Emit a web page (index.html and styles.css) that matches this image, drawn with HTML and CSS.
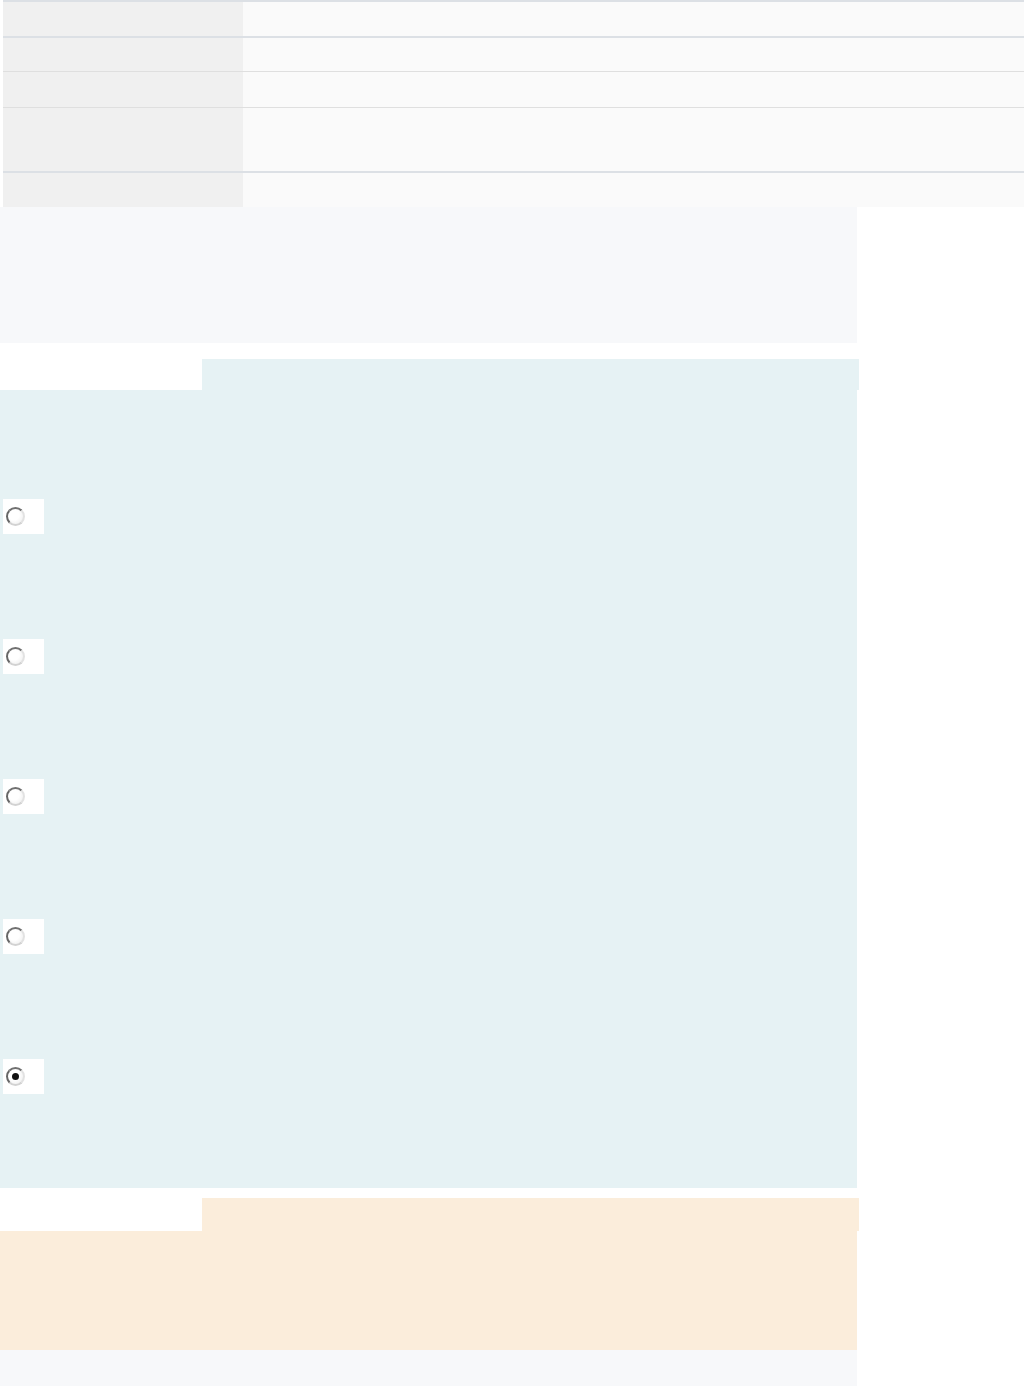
FILE: index.html
```html
<!DOCTYPE html>
<html lang="en">
<head>
    <meta charset="UTF-8">
    <meta name="viewport" content="width=device-width, initial-scale=1.0">
    <title>Question</title>
    <link rel="stylesheet" href="styles.css">
</head>
<body>
    <!-- Info table -->
    <div class="info-table">
        <div class="info-row section">
            <div class="info-label"></div>
            <div class="info-value"></div>
        </div>
        <div class="info-row section short">
            <div class="info-label"></div>
            <div class="info-value"></div>
        </div>
        <div class="info-row">
            <div class="info-label"></div>
            <div class="info-value"></div>
        </div>
        <div class="info-row tall">
            <div class="info-label"></div>
            <div class="info-value"></div>
        </div>
        <div class="info-row section">
            <div class="info-label"></div>
            <div class="info-value"></div>
        </div>
    </div>

    <!-- Question text -->
    <div class="question-box"></div>

    <!-- Answer options -->
    <div class="panel answers">
        <div class="panel-tab"></div>
        <div class="panel-body">
            <div class="option"><span class="radio-box"><span class="radio"></span></span></div>
            <div class="option"><span class="radio-box"><span class="radio"></span></span></div>
            <div class="option"><span class="radio-box"><span class="radio"></span></span></div>
            <div class="option"><span class="radio-box"><span class="radio"></span></span></div>
            <div class="option"><span class="radio-box"><span class="radio checked"></span></span></div>
        </div>
    </div>

    <!-- Feedback -->
    <div class="panel feedback">
        <div class="panel-tab"></div>
        <div class="panel-body"></div>
    </div>

    <div class="footer-box"></div>
</body>
</html>
```

FILE: styles.css
```css
body {
    margin: 0;
    padding: 0;
    background: #fff;
    font-family: "Liberation Sans", Arial, sans-serif;
    overflow-x: hidden;
}

/* Info table */
.info-table {
    margin-left: 3px;
    width: calc(100% - 3px);
}

.info-row {
    display: grid;
    grid-template-columns: 240px 1fr;
    height: 35px;
    border-top: 1px solid #dfdfdf;
}

.info-row.section {
    border-top: 2px solid #dce0e5;
    height: 34px;
}

.info-row.short {
    height: 33px;
}

.info-row.tall {
    height: 63px;
}

.info-label {
    background: #f0f0f0;
}

.info-value {
    background: #fafafa;
}

/* Question */
.question-box {
    width: 857px;
    height: 136px;
    background: #f7f8fa;
    margin-bottom: 16px;
}

/* Panels with tab */
.panel {
    width: 859px;
}

.panel-tab {
    margin-left: 202px;
    height: 31px;
}

.panel-body {
    width: 857px;
}

.answers .panel-tab,
.answers .panel-body {
    background: #e6f2f4;
}

.answers .panel-body {
    display: flex;
    flex-direction: column;
    gap: 105px;
    padding: 109px 0 94px 3px;
    box-sizing: border-box;
    height: 798px;
}

.feedback {
    margin-top: 10px;
}

.feedback .panel-tab,
.feedback .panel-body {
    background: #fbeddb;
}

.feedback .panel-tab {
    height: 33px;
}

.feedback .panel-body {
    height: 119px;
}

/* Radio */
.option {
    height: 35px;
}

.radio-box {
    display: flex;
    align-items: center;
    width: 41px;
    height: 35px;
    background: #fff;
    padding-left: 3px;
    box-sizing: border-box;
}

.radio {
    position: relative;
    width: 19px;
    height: 19px;
    border-radius: 50%;
    border: 2px solid;
    border-color: #707070 #e2e2e2 #d2d2d2 #666;
    background: radial-gradient(circle at 40% 40%, #fff 40%, #e8e8e8 100%);
    box-sizing: border-box;
}

.radio.checked::after {
    content: "";
    position: absolute;
    left: 4px;
    top: 4px;
    width: 7px;
    height: 7px;
    border-radius: 50%;
    background: #111;
}

.footer-box {
    width: 857px;
    height: 40px;
    background: #f7f8fa;
}
```
